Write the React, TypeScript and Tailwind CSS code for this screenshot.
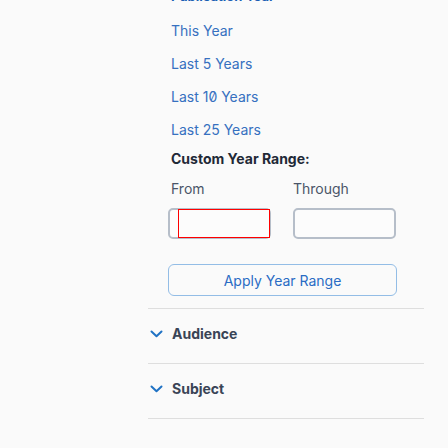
import React from "react";

function Chevron() {
  return (
    <svg width="13" height="8" viewBox="0 0 13 8" fill="none" className="mt-[6px] shrink-0">
      <path d="M1.5 1.5 L6.5 6.2 L11.5 1.5" stroke="#1f72c4" strokeWidth="2" strokeLinecap="round" strokeLinejoin="round" />
    </svg>
  );
}

export default function App() {
  const links = ["This Year", "Last 5 Years", "Last 10 Years", "Last 25 Years"];
  return (
    <div className="w-full h-[448px] overflow-hidden bg-[#fafafa] font-['Inter','Noto_Sans',sans-serif]">
      <div className="ml-[148px] w-[276px] flex flex-col">
        <div className="-mt-[14px] h-[20px] pl-[23px] text-[13px] leading-[20px] font-bold text-[#1a5fb4]">
          Publication Year
        </div>
        <div className="pt-[8px] flex flex-col pl-[23px] [font-feature-settings:'zero']">
          {links.map((l) => (
            <div key={l} className="h-[33px] leading-[33px] text-[14px] text-[#3670c0]">
              {l}
            </div>
          ))}
        </div>
        <div className="pl-[23px] h-[26px] leading-[26px] text-[14px] font-bold text-[#1f2937]">
          Custom Year Range:
        </div>
        <div className="pl-[23px] h-[34px] leading-[34px] text-[14px] text-[#4a5568] flex">
          <div className="w-[122px]">From</div>
          <div>Through</div>
        </div>
        <div className="mt-[2px] pl-[20px] flex gap-[22px]">
          <div className="relative w-[103px] h-[31px] rounded-[5px] border-2 border-[#b6bec9] bg-[#fcfcfc]">
            <div className="absolute left-[8px] -top-[1px] -bottom-[1px] -right-[1px] bg-[#ff0000] p-px">
              <div className="w-full h-full bg-[#fcfcfc]" />
            </div>
          </div>
          <div className="w-[103px] h-[31px] rounded-[5px] border-2 border-[#b6bec9] bg-[#fcfcfc]" />
        </div>
        <div className="mt-[25px] ml-[20px] w-[229px] h-[32px] rounded-[6px] border border-[#93bde6] flex items-center justify-center text-[14px] text-[#2a6cc4]">
          Apply Year Range
        </div>
        <div className="mt-[12px] h-px bg-[#dedede]" />
        <div className="h-[54px] pt-[15px] pl-[2px] flex gap-[9px] items-start">
          <Chevron />
          <div className="text-[14px] leading-[20px] font-bold text-[#394456]">Audience</div>
        </div>
        <div className="h-px bg-[#dedede]" />
        <div className="h-[54px] pt-[15px] pl-[2px] flex gap-[9px] items-start">
          <Chevron />
          <div className="text-[14px] leading-[20px] font-bold text-[#394456]">Subject</div>
        </div>
        <div className="h-px bg-[#dedede]" />
      </div>
    </div>
  );
}
